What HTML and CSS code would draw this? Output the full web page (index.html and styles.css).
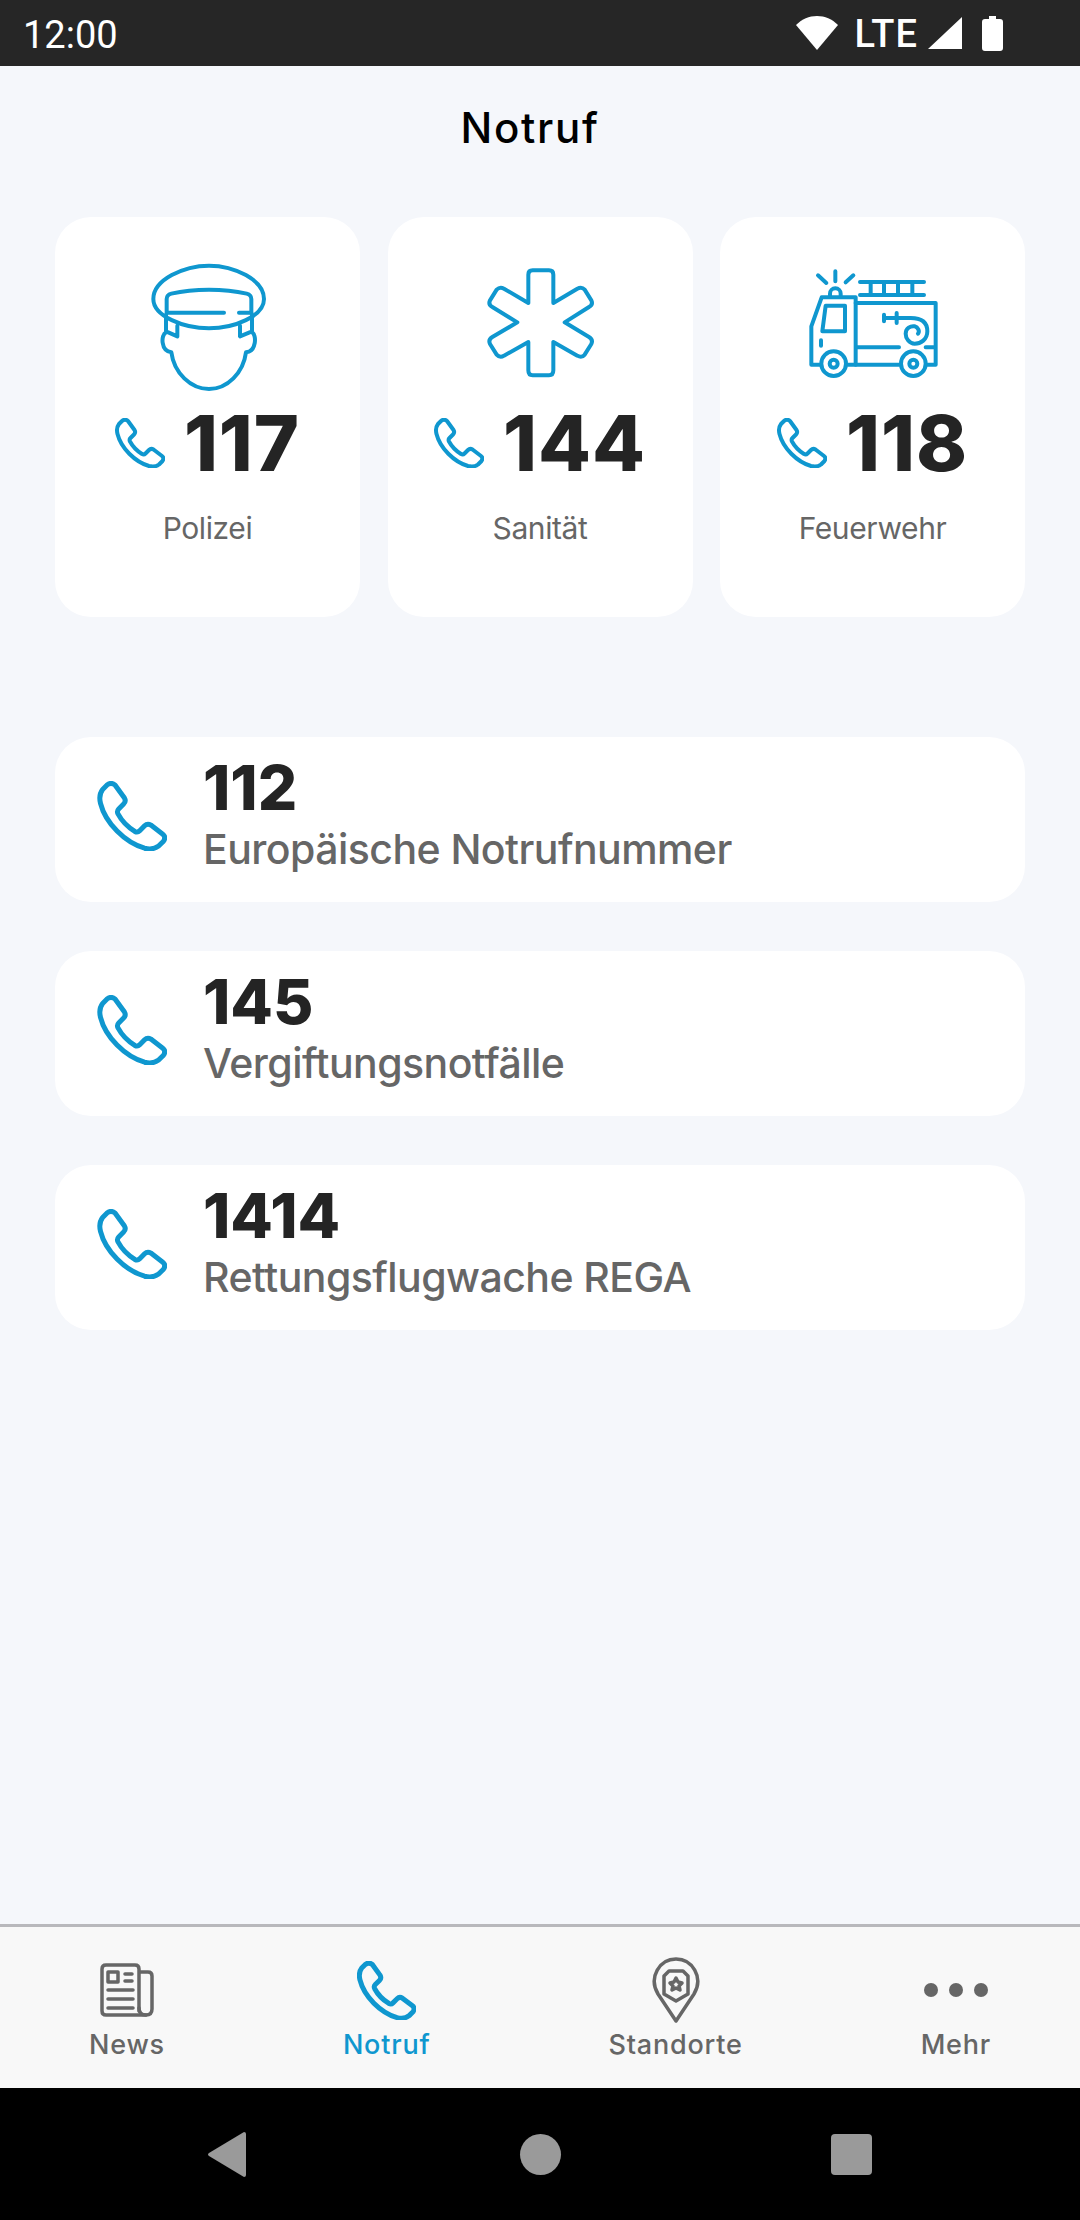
FILE: index.html
```html
<!DOCTYPE html>
<html lang="de">
<head>
<meta charset="utf-8">
<title>Notruf</title>
<link rel="stylesheet" href="styles.css">
</head>
<body>
<svg class="defs" aria-hidden="true">
  <symbol id="phone" viewBox="0 0 50 50">
    <path vector-effect="non-scaling-stroke" d="M4 6 L7 3 Q10 0.5 13 3 L19.5 12 Q21 14.5 19 16.5 L15.5 20 Q14 21.5 15 23.5 Q19 31 27 36 Q29 37 30.5 35.5 L34 32 Q36 30 38.5 31.5 L47 38 Q49.5 40 47.5 43 L44 46.5 Q40 49.5 34 48 C20 44 6 30 2.5 16 Q1 10 4 6 Z"/>
  </symbol>
</svg>

<header class="statusbar">
  <span class="clock">12:00</span>
  <div class="status-icons">
    <svg class="wifi" viewBox="0 0 42 34"><path d="M21 34 L0 9 C6 3 13 0 21 0 C29 0 36 3 42 9 Z"/></svg>
    <span class="lte">LTE</span>
    <svg class="signal" viewBox="0 0 34 32"><path d="M0 32 L34 0 V32 Z"/></svg>
    <svg class="battery" viewBox="0 0 21 35"><path d="M7 0 H14 V3 H18 Q21 3 21 6 V32 Q21 35 18 35 H3 Q0 35 0 32 V6 Q0 3 3 3 H7 Z"/></svg>
  </div>
</header>

<main class="content">
  <h1 class="title">Notruf</h1>

  <section class="cards">
    <article class="card">
      <svg class="art" viewBox="307 160 390 390">
        <path d="M338 268 C338 210 430 168 505 168 C580 168 670 210 670 268 C670 320 580 356 505 356 C430 356 338 320 338 268 Z"/>
        <path d="M378 310 V268 Q378 256 392 252 C460 236 550 236 618 252 Q632 256 632 268 V310"/>
        <path d="M380 309 H550 M595 309 H632"/>
        <path d="M376 315 V365 L410 380 V348 M634 315 V365 L598 380 V348"/>
        <path d="M376 368 C360 375 360 425 392 428 C400 490 450 538 505 538 C560 538 608 490 616 428 C648 425 648 375 634 368"/>
      </svg>
      <div class="dial">
        <svg class="phone"><use href="#phone"/></svg>
        <span class="number">117</span>
      </div>
      <p class="label">Polizei</p>
    </article>

    <article class="card">
      <svg class="art" viewBox="283 160 390 390">
        <path d="M443 280 V195 Q443 182 456 182 H505 Q518 182 518 195 V280 L590 237 Q603 230 612 240 L632 272 Q638 285 625 292 L552 338 L625 382 Q638 390 632 403 L612 435 Q603 446 590 438 L518 397 V482 Q518 497 505 497 H456 Q443 497 443 482 V397 L370 438 Q358 446 348 435 L328 403 Q322 390 335 382 L410 338 L335 292 Q322 285 328 272 L348 240 Q358 230 370 237 Z"/>
      </svg>
      <div class="dial">
        <svg class="phone"><use href="#phone"/></svg>
        <span class="number">144</span>
      </div>
      <p class="label">Sanität</p>
    </article>

    <article class="card">
      <svg class="art" viewBox="292 160 390 390">
        <path d="M322 197 L347 220 M374 185 V215 M428 197 L405 218"/>
        <path d="M358 258 V252 A16 16 0 0 1 390 252 V258"/>
        <path d="M330 465 H302 V350 L333 263 H435 V465"/>
        <path d="M435 280 H675 V465 H650 M412 465 H565"/>
        <circle cx="369" cy="462" r="37"/><circle cx="369" cy="462" r="12"/>
        <circle cx="608" cy="462" r="37"/><circle cx="608" cy="462" r="12"/>
        <path d="M345 288 H403 V365 H335 Z"/>
        <path d="M331 392 V408"/>
        <path d="M448 217 H640 M448 256 H640 M480 217 V256 M520 217 V256 M562 217 V256 M605 217 V256"/>
        <path d="M438 413 H565 M645 413 H672"/>
        <path d="M520 325 H600 C640 325 650 345 650 365 C650 390 630 402 612 402 C595 402 585 385 585 372 C585 355 600 348 612 350 C622 352 628 365 622 372"/>
        <path d="M520 315 V335 M558 310 V340"/>
      </svg>
      <div class="dial">
        <svg class="phone"><use href="#phone"/></svg>
        <span class="number">118</span>
      </div>
      <p class="label">Feuerwehr</p>
    </article>
  </section>

  <section class="rows">
    <article class="row">
      <svg class="phone phone-large"><use href="#phone"/></svg>
      <div class="row-text">
        <span class="row-number">112</span>
        <span class="row-label">Europäische Notrufnummer</span>
      </div>
    </article>
    <article class="row">
      <svg class="phone phone-large"><use href="#phone"/></svg>
      <div class="row-text">
        <span class="row-number">145</span>
        <span class="row-label">Vergiftungsnotfälle</span>
      </div>
    </article>
    <article class="row">
      <svg class="phone phone-large"><use href="#phone"/></svg>
      <div class="row-text">
        <span class="row-number">1414</span>
        <span class="row-label">Rettungsflugwache REGA</span>
      </div>
    </article>
  </section>
</main>

<nav class="tabs">
  <div class="tab">
    <div class="tab-icon">
      <svg class="news" viewBox="0 0 54 54">
        <path d="M39 48 V6 Q39 2 35 2 H6 Q2 2 2 6 V48 Q2 52 6 52 H46 Q52 52 52 46 V13 Q52 9 48 9 H39"/>
        <path d="M39 45 Q39 52 46 52"/>
        <path d="M8 9 H18 V19 H8 Z"/>
        <path d="M25 11 H32 M25 18 H32 M8 27 H33 M8 36 H33 M8 45 H33"/>
      </svg>
    </div>
    <span class="tab-label">News</span>
  </div>
  <div class="tab tab-active">
    <div class="tab-icon">
      <svg class="phone phone-tab"><use href="#phone"/></svg>
    </div>
    <span class="tab-label">Notruf</span>
  </div>
  <div class="tab">
    <div class="tab-icon">
      <svg class="pin" viewBox="0 0 48 66">
        <path d="M24 64 L6 37 C-4 20 8 2 24 2 C40 2 52 20 42 37 Z"/>
        <path d="M17 14 H31 L36 19 V37 L24 44 L12 37 V19 Z"/>
        <path d="M24 21 L26 25 L30 26 L27 29 L28 33 L24 31 L20 33 L21 29 L18 26 L22 25 Z"/>
      </svg>
    </div>
    <span class="tab-label">Standorte</span>
  </div>
  <div class="tab">
    <div class="tab-icon">
      <div class="dots"><i class="dot"></i><i class="dot"></i><i class="dot"></i></div>
    </div>
    <span class="tab-label">Mehr</span>
  </div>
</nav>

<footer class="navbar">
  <svg class="nav-back" viewBox="0 0 38 45"><path d="M36 0 Q38 0 38 2 V43 Q38 45 36 45 L1 24 Q-1 22.500 1 21 Z"/></svg>
  <span class="nav-home"></span>
  <span class="nav-recent"></span>
</footer>
</body>
</html>
```

FILE: styles.css
```css
* { box-sizing: border-box; }

html, body { margin: 0; padding: 0; }

body {
  width: 1080px;
  height: 2220px;
  display: flex;
  flex-direction: column;
  background: #f5f7fb;
  font-family: Inter, "Liberation Sans", sans-serif;
  overflow: hidden;
}

.defs { width: 0; height: 0; display: block; }

/* status bar */
.statusbar {
  height: 66px;
  flex: none;
  background: #262626;
  color: #fff;
  display: flex;
  align-items: center;
  justify-content: space-between;
  padding: 0 77px 0 23px;
}

.clock {
  font-family: Roboto, sans-serif;
  font-size: 38px;
  line-height: 66px;
  padding-top: 3px;
}

.status-icons {
  display: flex;
  align-items: center;
  fill: #fff;
}

.wifi { width: 42px; height: 34px; }

.lte {
  font-family: Roboto, sans-serif;
  font-weight: 500;
  font-size: 38px;
  letter-spacing: 1px;
  margin-left: 16px;
  padding-top: 1px;
}

.signal { width: 34px; height: 32px; margin-left: 10px; }

.battery { width: 21px; height: 35px; margin-left: 20px; }

/* content */
.content {
  flex: 1;
  padding: 0 55px;
}

.title {
  margin: 36px 0 0;
  padding-right: 20px;
  font-size: 42px;
  line-height: 52px;
  font-weight: 500;
  letter-spacing: 1.7px;
  color: #000;
  text-align: center;
}

.cards {
  margin-top: 63px;
  display: grid;
  grid-template-columns: repeat(3, 305px);
  justify-content: space-between;
}

.card {
  height: 400px;
  background: #fff;
  border-radius: 36px;
  padding-top: 46px;
  display: flex;
  flex-direction: column;
  align-items: center;
}

.art {
  width: 130px;
  height: 130px;
  flex: none;
  fill: none;
  stroke: #0f97cf;
  stroke-width: 12;
  stroke-linecap: round;
  stroke-linejoin: round;
}

.dial {
  display: flex;
  align-items: center;
  gap: 19px;
  height: 80px;
  margin-top: 10px;
}

.phone {
  width: 50px;
  height: 50px;
  flex: none;
  fill: none;
  stroke: #0f97cf;
  stroke-width: 4px;
  stroke-linejoin: round;
}

.number {
  font-size: 77px;
  line-height: 80px;
  font-weight: 800;
  letter-spacing: 1px;
  color: #242424;
}

.label {
  margin: 25px 0 0;
  font-size: 30px;
  line-height: 40px;
  letter-spacing: -0.4px;
  color: #666;
}

/* list rows */
.rows {
  margin-top: 120px;
  display: flex;
  flex-direction: column;
  gap: 49px;
}

.row {
  height: 165px;
  background: #fff;
  border-radius: 36px;
  padding-left: 42px;
  display: flex;
  align-items: center;
  gap: 36px;
}

.phone-large {
  width: 70px;
  height: 70px;
  stroke-width: 5px;
  margin-bottom: 7px;
}

.row-text {
  display: flex;
  flex-direction: column;
  padding-bottom: 14px;
}

.row-number {
  font-size: 62px;
  line-height: 72px;
  font-weight: 800;
  color: #242424;
}

.row-label {
  font-size: 41px;
  line-height: 50px;
  font-weight: 500;
  letter-spacing: -0.55px;
  color: #666;
}

/* tab bar */
.tabs {
  flex: none;
  height: 164px;
  background: #f8f8f8;
  border-top: 3px solid #b8b8bc;
  display: flex;
  justify-content: space-around;
  padding-top: 28px;
}

.tab {
  display: flex;
  flex-direction: column;
  align-items: center;
  color: #666;
}

.tab-active { color: #0f97cf; }

.tab-icon {
  height: 70px;
  margin-bottom: 2px;
  display: flex;
  align-items: center;
  justify-content: center;
}

.tab-label {
  font-size: 27px;
  line-height: 36px;
  font-weight: 500;
  letter-spacing: 0.8px;
}

.news, .pin {
  fill: none;
  stroke: #666;
  stroke-width: 3.5;
  stroke-linecap: round;
  stroke-linejoin: round;
}

.news { width: 54px; height: 54px; }

.pin { width: 48px; height: 66px; }

.phone-tab { width: 59px; height: 59px; stroke-width: 5px; margin-bottom: 0; }

.dots { display: flex; gap: 11px; }

.dot {
  width: 14px;
  height: 14px;
  border-radius: 50%;
  background: #666;
}

/* android nav bar */
.navbar {
  flex: none;
  height: 132px;
  background: #000;
  display: flex;
  align-items: center;
  justify-content: center;
}

.nav-back { width: 38px; height: 45px; fill: #9a9a9a; margin-right: 274px; }

.nav-home {
  width: 41px;
  height: 41px;
  border-radius: 50%;
  background: #9a9a9a;
  margin-right: 270px;
}

.nav-recent {
  width: 41px;
  height: 41px;
  border-radius: 4px;
  background: #9a9a9a;
}
```
